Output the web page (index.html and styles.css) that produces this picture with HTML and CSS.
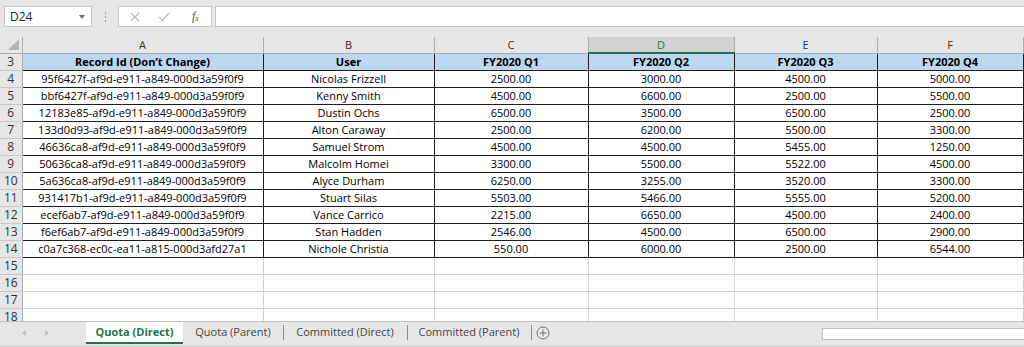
FILE: index.html
```html
<!doctype html>
<html>
    <head>
        <title>Quota</title>
        <link rel="stylesheet" href="styles.css">
    </head>
    <body>
        <div class="top">
            <div class="namebox">
                <span>D24</span>
                <span class="caret"></span>
            </div>
            <div class="dots"><i></i><i></i><i></i></div>
            <div class="fxbox">
                <svg width="10" height="10" viewBox="0 0 10 10"><path d="M1 1 L9 9 M9 1 L1 9" stroke="#b8b8b8" stroke-width="1.2" fill="none"/></svg>
                <svg width="12" height="10" viewBox="0 0 12 10"><path d="M1 5 L4.5 8.5 L11 1" stroke="#b8b8b8" stroke-width="1.2" fill="none"/></svg>
                <span class="fx">f<sub>x</sub></span>
            </div>
            <div class="formula"></div>
        </div>
        <div class="grid">
            <table class="sheet">
                <colgroup>
                    <col class="c0"><col class="ca"><col class="cb"><col class="cc"><col class="cd"><col class="ce"><col class="cf"><col>
                </colgroup>
                <thead>
                    <tr class="letters">
                        <th class="corner"><span class="tri"></span></th>
                        <th>A</th><th>B</th><th>C</th><th class="sel">D</th><th>E</th><th>F</th><th></th>
                    </tr>
                </thead>
                <tbody id="rows">
                    <tr class="head">
                        <th>3</th>
                        <td>Record Id (Don’t Change)</td><td>User</td><td>FY2020 Q1</td><td>FY2020 Q2</td><td>FY2020 Q3</td><td>FY2020 Q4</td><td class="out"></td>
                    </tr>
                </tbody>
            </table>
        </div>
        <div class="tabs">
            <div class="arrows"><span class="al"></span><span class="ar"></span></div>
            <div class="tab active">Quota (Direct)</div>
            <div class="tab t1">Quota (Parent)</div>
            <div class="tab t2">Committed (Direct)</div>
            <div class="tab t2">Committed (Parent)</div>
            <div class="add">
                <svg width="14" height="14" viewBox="0 0 14 14"><circle cx="7" cy="7" r="6" stroke="#777" fill="none"/><path d="M7 3.5 V10.5 M3.5 7 H10.5" stroke="#777" fill="none"/></svg>
            </div>
            <div class="spacer"></div>
            <div class="hscroll"></div>
        </div>
        <script>
(function () {
const data = [
    ['95f6427f-af9d-e911-a849-000d3a59f0f9', 'Nicolas Frizzell', '2500.00', '3000.00', '4500.00', '5000.00'],
    ['bbf6427f-af9d-e911-a849-000d3a59f0f9', 'Kenny Smith', '4500.00', '6600.00', '2500.00', '5500.00'],
    ['12183e85-af9d-e911-a849-000d3a59f0f9', 'Dustin Ochs', '6500.00', '3500.00', '6500.00', '2500.00'],
    ['133d0d93-af9d-e911-a849-000d3a59f0f9', 'Alton Caraway', '2500.00', '6200.00', '5500.00', '3300.00'],
    ['46636ca8-af9d-e911-a849-000d3a59f0f9', 'Samuel Strom', '4500.00', '4500.00', '5455.00', '1250.00'],
    ['50636ca8-af9d-e911-a849-000d3a59f0f9', 'Malcolm Homei', '3300.00', '5500.00', '5522.00', '4500.00'],
    ['5a636ca8-af9d-e911-a849-000d3a59f0f9', 'Alyce Durham', '6250.00', '3255.00', '3520.00', '3300.00'],
    ['931417b1-af9d-e911-a849-000d3a59f0f9', 'Stuart Silas', '5503.00', '5466.00', '5555.00', '5200.00'],
    ['ecef6ab7-af9d-e911-a849-000d3a59f0f9', 'Vance Carrico', '2215.00', '6650.00', '4500.00', '2400.00'],
    ['f6ef6ab7-af9d-e911-a849-000d3a59f0f9', 'Stan Hadden', '2546.00', '4500.00', '6500.00', '2900.00'],
    ['c0a7c368-ec0c-ea11-a815-000d3afd27a1', 'Nichole Christia', '550.00', '6000.00', '2500.00', '6544.00']
];
const body = document.getElementById('rows');
let n = 4;
for (const row of data) {
    const tr = document.createElement('tr');
    tr.className = 'rec';
    tr.innerHTML = '<th>' + n + '</th>' + row.map(v => '<td>' + v + '</td>').join('') + '<td class="out"></td>';
    body.appendChild(tr);
    n++;
}
for (; n <= 18; n++) {
    const tr = document.createElement('tr');
    tr.className = 'blank';
    tr.innerHTML = '<th>' + n + '</th><td></td><td></td><td></td><td></td><td></td><td></td><td></td>';
    body.appendChild(tr);
}
})();
        </script>
    </body>
</html>
```

FILE: styles.css
```css
* {
    box-sizing: border-box;
}
html,
body {
    margin: 0;
    padding: 0;
    height: 100%;
    overflow: hidden;
    background-color: #e6e6e6;
}
body {
    font-family: "Open Sans", "Noto Sans", sans-serif;
    display: flex;
    flex-direction: column;
    width: 1024px;
    height: 347px;
}

/* formula bar */
.top {
    height: 37px;
    flex-shrink: 0;
    display: flex;
    align-items: flex-start;
    padding: 6px 0 0 4px;
}
.namebox {
    width: 88px;
    height: 21px;
    background: #fff;
    border: 1px solid #c6c6c6;
    display: flex;
    align-items: center;
    justify-content: space-between;
    padding: 0 6px 0 5px;
    font-size: 12px;
    color: #222;
}
.caret {
    width: 0;
    height: 0;
    border-left: 3.5px solid transparent;
    border-right: 3.5px solid transparent;
    border-top: 4px solid #6b6b6b;
}
.dots {
    width: 26px;
    height: 21px;
    display: flex;
    flex-direction: column;
    align-items: center;
    justify-content: center;
    gap: 2px;
}
.dots i {
    display: block;
    width: 1px;
    height: 2px;
    background: #a0a0a0;
}
.fxbox {
    width: 94px;
    height: 21px;
    background: #fff;
    border: 1px solid #c6c6c6;
    display: flex;
    align-items: center;
    padding: 0 0 0 11px;
    gap: 18px;
}
.fx {
    font-family: "Liberation Serif", serif;
    font-style: italic;
    font-size: 12px;
    color: #555;
    margin-left: 4px;
}
.fx sub {
    font-size: 8px;
    vertical-align: -1px;
}
.formula {
    flex: 1;
    height: 21px;
    margin-left: 3px;
    background: #fff;
    border: 1px solid #c6c6c6;
    border-right: none;
}

/* grid */
.grid {
    height: 284px;
    flex-shrink: 0;
    overflow: hidden;
    background: #fff;
}
.sheet {
    border-collapse: collapse;
    table-layout: fixed;
    width: 1025px;
    font-family: "Open Sans", sans-serif;
    font-size: 11px;
    color: #000;
}
.c0 { width: 22px; }
.ca { width: 241px; }
.cb { width: 171px; }
.cc { width: 154px; }
.cd { width: 146px; }
.ce { width: 143px; }
.cf { width: 146px; }
.sheet th,
.sheet td {
    padding: 0;
    text-align: center;
    white-space: nowrap;
    overflow: hidden;
    line-height: 15px;
}
.letters th {
    height: 16px;
    background: #e6e6e6;
    border-left: 1px solid #ababab;
    border-bottom: 1px solid #ababab;
    font-weight: normal;
    font-size: 11px;
    color: #333;
}
.letters th.sel {
    background: #d2d2d2;
    color: #217346;
    border-bottom: 2px solid #217346;
}
.letters th.corner {
    border-left: none;
    position: relative;
}
.tri {
    position: absolute;
    right: 3px;
    bottom: 3px;
    width: 0;
    height: 0;
    border-left: 11px solid transparent;
    border-bottom: 11px solid #b4b4b4;
}
tbody tr {
    height: 17px;
}
tbody th {
    background: #e6e6e6;
    border-top: 1px solid #c8c8c8;
    border-bottom: 1px solid #c8c8c8;
    border-right: 1px solid #ababab;
    font-weight: normal;
    font-size: 12px;
    color: #333;
}
tbody td {
    border: 1px solid #d4d4d4;
}
.head td,
.rec td {
    border: 1px solid #1e1e1e;
}
.head td {
    background: #bdd7ee;
    font-weight: bold;
}
.sheet td.out {
    border: none;
    border-bottom: 1px solid #d4d4d4;
}

/* sheet tabs */
.tabs {
    flex: 1;
    display: flex;
    align-items: flex-start;
    border-top: 1px solid #c0c0c0;
    border-bottom: 1px solid #c6c6c6;
    font-family: "Open Sans", sans-serif;
    font-size: 11px;
    color: #444;
}
.arrows {
    width: 86px;
    height: 22px;
    display: flex;
    align-items: center;
    padding-left: 22px;
    gap: 19px;
}
.al,
.ar {
    width: 0;
    height: 0;
    border-top: 3px solid transparent;
    border-bottom: 3px solid transparent;
}
.al {
    border-right: 4px solid #c2c2c2;
}
.ar {
    border-left: 4px solid #c2c2c2;
}
.tab {
    height: 22px;
    line-height: 20px;
    text-align: center;
    position: relative;
}
.tab.t1 {
    width: 100px;
}
.tab.t2 {
    width: 124px;
}
.tab + .tab::before {
    content: "";
    position: absolute;
    left: 0;
    top: 3px;
    height: 15px;
    border-left: 1px solid #8a8a8a;
}
.tab.active {
    background: #fff;
    color: #217346;
    font-weight: bold;
    border-bottom: 2px solid #217346;
    width: 97px;
}
.tab.active + .tab::before {
    display: none;
}
.add {
    display: flex;
    align-items: center;
    padding-left: 4px;
    border-left: 1px solid #8a8a8a;
    margin-top: 3px;
    height: 15px;
}
.spacer {
    flex: 1;
}
.hscroll {
    width: 202px;
    height: 12px;
    margin-top: 6px;
    background: #fff;
    border: 1px solid #c0c0c0;
    border-right: none;
}
```
